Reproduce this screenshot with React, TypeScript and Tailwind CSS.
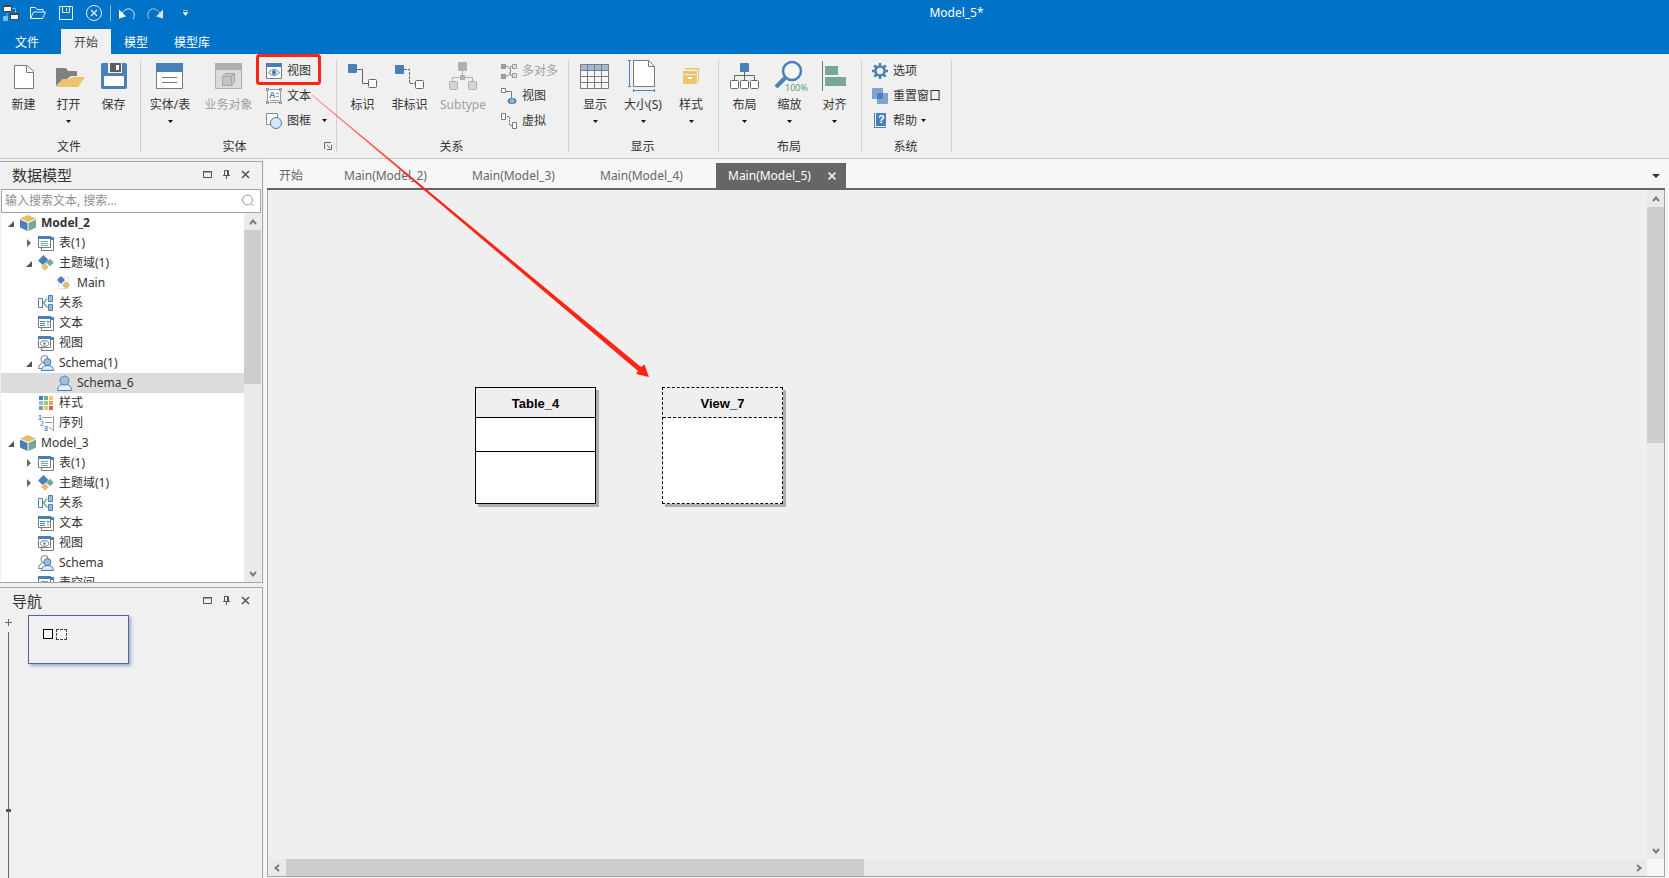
import React, { useState } from "react";

type IconName = keyof typeof icons;

const BLUE = "#4a80b8";
const GRAY = "#7a7a7a";
const GREEN = "#76a797";
const YELLOW = "#efc26c";

const icons = {
    newFile: (
        <>
            <path d="M6.5 5.5h13l6 6v17h-19z" fill="#fff" stroke={GRAY} />
            <path d="M18.5 5.5v7h7" fill="#fff" stroke={GRAY} />
        </>
    ),
    open: (
        <>
            <path d="M3 26V9q0-1 1-1h9l2 3h8q1 0 1 1v4h-6l-4 3H10z" fill="#808080" />
            <path d="M3 27l7-8h6l4-2h12l-7 10z" fill={YELLOW} />
        </>
    ),
    save: (
        <>
            <path d="M3 5q0-2 2-2h22q2 0 2 2v22q0 2-2 2H5q-2 0-2-2z" fill={BLUE} />
            <path d="M6 17q0-1 1-1h18q1 0 1 1v9H6z" fill="#fff" />
            <path d="M10 2h14v11H10z" fill="#f0f0f0" />
            <path d="M12 3h11v9H12z" fill="#5e5e5e" />
            <path d="M18 5h3v5h-3z" fill="#fff" />
        </>
    ),
    entity: (
        <>
            <path d="M2.5 4h26v24.5h-26z" fill="#fff" stroke={GRAY} />
            <path d="M2 3h27v9H2z" fill={BLUE} />
            <path d="M8 17.5h15M8 22.5h15" stroke={GRAY} />
        </>
    ),
    business: (
        <>
            <path d="M2.5 4h26v24.5h-26z" fill="#dcdcdc" stroke="#b0b0b0" />
            <path d="M2 3h27v7H2z" fill="#b0b0b0" />
            <path d="M9.500 16.500l3-3h9v9l-3 3h-9zM9.500 16.500h9v9M18.500 16.500l3-3" fill="#c4c4c4" stroke="#a6a6a6" />
        </>
    ),
    identify: (
        <>
            <rect x="1" y="4" width="9" height="9" rx="1" fill={BLUE} />
            <path d="M10 9.500h5.500v14h6" fill="none" stroke="#666" />
            <rect x="21.500" y="19.500" width="8" height="8" rx="1" fill="#fff" stroke="#666" />
        </>
    ),
    nonIdentify: (
        <>
            <rect x="1" y="5" width="9" height="9" rx="1" fill={BLUE} />
            <path d="M10 9.500h5.500v14h6" fill="none" stroke="#666" strokeDasharray="3 1" />
            <rect x="21.500" y="20.500" width="8" height="8" rx="1" fill="#fff" stroke="#666" />
        </>
    ),
    subtype: (
        <>
            <path d="M15.500 11v8M5.500 22v-4.500h20v4.500" fill="none" stroke="#b0b0b0" />
            <rect x="11" y="2" width="9" height="9" rx="1" fill="#b0b0b0" />
            <rect x="13" y="15" width="5" height="5" fill="#b0b0b0" />
            <rect x="2.500" y="21.500" width="8" height="8" rx="1" fill="#d4d4d4" stroke="#b0b0b0" />
            <rect x="21.500" y="21.500" width="8" height="8" rx="1" fill="#d4d4d4" stroke="#b0b0b0" />
        </>
    ),
    grid: (
        <>
            <path d="M1.500 4.500h28v24h-28z" fill="#f7f7f7" />
            <path d="M2 5h27v5H2z" fill="#9fb9d8" />
            <path d="M1.500 4.500h28v24h-28zM1 10.500h29M1 16.500h29M1 22.500h29M8.500 4v25M15.500 4v25M22.500 4v25" fill="none" stroke={GRAY} />
        </>
    ),
    size: (
        <>
            <path d="M6.500 .5h15l6 6v20h-21z" fill="#fff" stroke={GRAY} />
            <path d="M21.500 .5v6h6" fill="none" stroke={GRAY} />
            <path d="M2.500 0v27M1 .5h3M1 26.500h3M6 30.500h22M6.500 29v3M27.500 29v3" stroke={BLUE} />
        </>
    ),
    style: (
        <>
            <path d="M10 8h14v14h-1V9.500H10z" fill={YELLOW} />
            <path d="M8 11h14v3H8zM8 15h14v9H8z" fill={YELLOW} />
            <path d="M13 17h4v2h-4z" fill="#fff" />
        </>
    ),
    layout: (
        <>
            <path d="M15.500 12v8M5.500 20v-4.500h20v4.500" fill="none" stroke="#666" />
            <rect x="11" y="3" width="9" height="9" rx="1" fill={BLUE} />
            <rect x="1.500" y="20.500" width="8" height="8" rx="1" fill="#fff" stroke="#666" />
            <rect x="11.500" y="20.500" width="8" height="8" rx="1" fill="#fff" stroke="#666" />
            <rect x="21.500" y="20.500" width="8" height="8" rx="1" fill="#fff" stroke="#666" />
        </>
    ),
    zoom: (
        <>
            <circle cx="18" cy="11" r="9" fill="#f5f5f5" stroke={BLUE} strokeWidth="2.500" />
            <path d="M11 18L2 27" stroke={BLUE} strokeWidth="4" />
            <text x="11" y="31" fontSize="9" fill="#5b9a85" fontFamily="Noto Sans">100%</text>
        </>
    ),
    align: (
        <>
            <path d="M3.500 1v30" stroke={GRAY} />
            <path d="M6 6h13v9H6zM6 17h21v9H6z" fill={GREEN} />
        </>
    ),
    view: (
        <>
            <path d="M.5 1h15v14.500H.5z" fill="#fff" stroke={GRAY} />
            <path d="M0 0h16v4H0z" fill={BLUE} />
            <path d="M2.500 9.500q5.500-6 11 0q-5.500 6-11 0z" fill="#fff" stroke={BLUE} />
            <circle cx="8" cy="9.500" r="2.200" fill={BLUE} />
        </>
    ),
    text: (
        <>
            <path d="M1.500 1.500h13v13h-13z" fill="#fff" stroke="#9a9a9a" />
            <path d="M.5 .5h2v2h-2zM13.500 .5h2v2h-2zM.5 13.500h2v2h-2zM13.500 13.500h2v2h-2z" fill="#ddd" stroke="#8a8a8a" />
            <text x="3" y="10" fontSize="9" fontWeight="700" fill={BLUE} fontFamily="Liberation Sans">A</text>
            <path d="M10 5.500h3M10 8.500h3M4 12.500h9" stroke="#9a9a9a" />
        </>
    ),
    shapes: (
        <>
            <path d="M.5 .5h11v11H.5z" fill="#fff" stroke="#8a8a8a" />
            <circle cx="10" cy="10" r="5.500" fill="#d8e4f2" stroke={BLUE} />
        </>
    ),
    manyToMany: (
        <>
            <path d="M5 3.500h2l3 4.500-3 5H5M11 3.500H9.500v9H11" fill="none" stroke="#9a9a9a" />
            <path d="M0 1h5v5H0zM0 11h5v5H0z" fill="#9a9a9a" />
            <path d="M11.500 1.500h4v4h-4zM11.500 10.500h4v4h-4z" fill="#ddd" stroke="#9a9a9a" />
        </>
    ),
    viewRelation: (
        <>
            <path d="M.5 .5h4v4h-4z" fill="#fff" stroke={GRAY} />
            <path d="M5 3.500h5.500V10" fill="none" stroke={GRAY} />
            <ellipse cx="11" cy="13" rx="4.500" ry="3" fill={BLUE} />
            <circle cx="11" cy="13" r="1.800" fill="#fff" />
            <circle cx="11" cy="13" r="1" fill={BLUE} />
        </>
    ),
    virtual: (
        <>
            <path d="M.5 .5h4v6h-4zM11.500 9.500h4v6h-4z" fill="#fff" stroke={GRAY} />
            <path d="M6 3.500h2.500v9H11" fill="none" stroke={GRAY} strokeDasharray="2 1" />
        </>
    ),
    gear: (
        <>
            <circle cx="8" cy="8" r="4.500" fill="none" stroke={BLUE} strokeWidth="2.500" />
            <path d="M8 0v3M8 13v3M0 8h3M13 8h3M2.300 2.300l2.200 2.200M11.500 11.500l2.200 2.200M2.300 13.700l2.200-2.200M11.500 4.500l2.200-2.200" stroke={BLUE} strokeWidth="2.500" />
        </>
    ),
    resetWindow: (
        <>
            <path d="M0 0h11v11H0z" fill="#7fa5cf" />
            <path d="M5 5h11v11H5z" fill="#7fa5cf" />
            <path d="M5 5h6v6H5z" fill={BLUE} />
        </>
    ),
    help: (
        <>
            <path d="M4 0h10v13H4z" fill={BLUE} />
            <path d="M2.500 0v15M2.500 14.500H14" fill="none" stroke={BLUE} />
            <text x="6" y="10" fontSize="11" fontWeight="700" fill="#fff" fontFamily="Liberation Sans">?</text>
        </>
    ),
    model: (
        <>
            <path d="M8 0l8 3.500L8 7 0 3.500z" fill="#e5bd6c" />
            <path d="M0 4.500L7.500 8v8L0 12.500z" fill={BLUE} />
            <path d="M16 4.500L8.500 8v8l7.500-3.500z" fill={GREEN} />
        </>
    ),
    tables: (
        <>
            <path d="M3.500 2.500h12v13h-12z" fill="#fff" stroke={GRAY} />
            <path d="M.5 1.500h12v11H.5z" fill="#fff" stroke={GRAY} />
            <path d="M0 1h13v3H0zM13 2h3v3h-3z" fill={BLUE} />
            <path d="M3 6.500h7M3 8.500h7M3 10.500h7" stroke={GREEN} />
        </>
    ),
    domain: (
        <>
            <path d="M5.500 0L11 5.500 5.500 11 0 5.500z" fill={BLUE} />
            <path d="M12 3.500l4 4-4 4-4-4z" fill={GREEN} stroke="#fff" strokeWidth=".5" />
            <path d="M7 8l4 4-4 4-4-4z" fill="#e5bd78" stroke="#fff" strokeWidth=".5" />
        </>
    ),
    main: (
        <>
            <path d="M2.500 2.500h10v11h-10z" fill="#fff" stroke="#e2e2e2" />
            <path d="M5 1l4 4-4 4-4-4z" fill={BLUE} />
            <path d="M10 6l4 4-4 4-4-4z" fill="#e0b97a" />
        </>
    ),
    relation: (
        <>
            <path d="M9 3.500L5.500 8l4 4.500" fill="none" stroke={GREEN} strokeWidth="1.500" />
            <path d="M.5 3.500h4v9h-4z" fill="#fff" stroke={BLUE} />
            <path d="M10.500 .5h4v6h-4zM10.500 9.500h4v6h-4z" fill="#9fb9d8" stroke={BLUE} />
        </>
    ),
    texts: (
        <>
            <path d="M3.500 2.500h12v13h-12z" fill="#fff" stroke={GRAY} />
            <path d="M.5 1.500h12v11H.5z" fill="#fff" stroke={GRAY} />
            <path d="M0 1h13v3H0zM13 2h3v3h-3z" fill={BLUE} />
            <path d="M2 6.500h5M2 8.500h5M2 10.500h5" stroke={BLUE} />
            <path d="M8 6.500h4M10 6v5" stroke={GREEN} />
        </>
    ),
    views: (
        <>
            <path d="M3.500 2.500h12v13h-12z" fill="#fff" stroke={GRAY} />
            <path d="M.5 1.500h12v11H.5z" fill="#fff" stroke={GRAY} />
            <path d="M0 1h13v3H0zM13 2h3v3h-3z" fill={BLUE} />
            <ellipse cx="6.500" cy="8.500" rx="4.200" ry="2.800" fill="#fff" stroke={GRAY} />
            <circle cx="6.500" cy="8.500" r="1.500" fill={GREEN} />
        </>
    ),
    schemas: (
        <>
            <circle cx="6.500" cy="4" r="3.500" fill="#fff" stroke={GRAY} />
            <path d="M.5 13.500q0-4 4-5.500l3 0v5.500z" fill="#fff" stroke={GRAY} />
            <circle cx="9.500" cy="7" r="3.500" fill="#9fbbdc" stroke={BLUE} />
            <path d="M3.500 15.500q0-4.500 4.500-5h3q4.500 .5 4.500 5z" fill="#d8e4f2" stroke={BLUE} />
        </>
    ),
    schema: (
        <>
            <path d="M1.500 15.500q0-5 4.500-6h5q4.500 1 4.500 6z" fill="#e4edf7" stroke={BLUE} />
            <circle cx="8.500" cy="5.500" r="4.500" fill="#a3bddc" stroke={BLUE} />
        </>
    ),
    styles: (
        <>
            <path d="M1 1h4v4H1z" fill={BLUE} />
            <path d="M6 1h4v4H6zM1 11h4v4H1z" fill="#72a89a" />
            <path d="M11 1h4v4h-4z" fill={YELLOW} />
            <path d="M1 6h4v4H1z" fill="#8fc1d6" />
            <path d="M6 6h4v4H6z" fill="#9cc487" />
            <path d="M11 6h4v4h-4z" fill="#e6a35c" />
            <path d="M6 11h4v4H6z" fill="#dccb7e" />
            <path d="M11 11h4v4h-4z" fill="#de6440" />
        </>
    ),
    sequence: (
        <>
            <text x="0" y="5" fontSize="7" fontWeight="700" fill={BLUE} fontFamily="Liberation Sans">1</text>
            <text x="2" y="11" fontSize="7" fontWeight="700" fill={GREEN} fontFamily="Liberation Sans">2</text>
            <text x="6" y="16" fontSize="7" fontWeight="700" fill={BLUE} fontFamily="Liberation Sans">3</text>
            <path d="M4 2.500h10M7 7.500h7M15.500 1v14.500L11 12" fill="none" stroke="#9a9a9a" />
        </>
    ),
    app: (
        <>
            <path d="M8 3.500h4.500V8M4 8v4M8 12.500h3" fill="none" stroke="#5ab4f5" />
            <path d="M.5 .5h8v6h-8z" fill="#fff" stroke="#444" />
            <path d="M0 0h9v2H0z" fill="#444" />
            <path d="M7.500 8.500h8v6h-8z" fill="#fff" stroke="#444" />
            <path d="M7 8h9v2H7z" fill="#444" />
            <path d="M0 11h5v5H0z" fill="#6cc0fa" />
        </>
    ),
    openLine: <path d="M.5 13.500v-11h5l1.500 2h6V7M.5 13.500l3-6.500h12l-3 6.500z" fill="none" stroke="#e5f1fb" />,
    saveLine: <path d="M1.500 1.500h13v13h-13zM4.500 1.500v6h7v-6M8.500 3v3" fill="none" stroke="#e5f1fb" />,
    closeCircle: (
        <>
            <circle cx="8" cy="8" r="7.500" fill="none" stroke="#e5f1fb" />
            <path d="M5 5l6 6M11 5l-6 6" stroke="#e5f1fb" strokeWidth="1.300" />
        </>
    ),
    undo: (
        <>
            <path d="M3 8q5-6.500 10-3q4 3.500 1 9" fill="none" stroke="#d5e8f8" />
            <path d="M0 4.500v9l7-2z" fill="#fff" />
        </>
    ),
    redo: (
        <>
            <path d="M13 8Q8 1.500 3 5q-4 3.500-1 9" fill="none" stroke="#a8c8e2" />
            <path d="M16 4.500v9l-7-2z" fill="#d5e3ee" />
        </>
    ),
};

const Icon: React.FC<{ name: IconName; size?: number }> = ({ name, size = 16 }) => (
    <svg width={size} height={size} viewBox={`0 0 ${size} ${size}`} className="shrink-0 overflow-visible" aria-hidden="true">
        {icons[name]}
    </svg>
);

const Caret: React.FC = () => (
    <svg width="5" height="3" viewBox="0 0 5 3" aria-hidden="true">
        <path d="M0 0h5L2.500 3z" fill="#111" />
    </svg>
);

type LargeProps = {
    icon: IconName;
    label: string;
    width: string;
    menu?: boolean;
    disabled?: boolean;
};

const LargeButton: React.FC<LargeProps> = ({ icon, label, width, menu, disabled }) => (
    <button disabled={disabled} className={`${width} flex flex-col items-center whitespace-nowrap disabled:text-[#a0a0a0]`}>
        <Icon name={icon} size={32} />
        <span className="mt-[5px] leading-4">{label}</span>
        {menu && <span className="mt-[7px] flex"><Caret /></span>}
    </button>
);

type SmallProps = {
    icon: IconName;
    label: string;
    menu?: boolean;
    wideMenu?: boolean;
    disabled?: boolean;
};

const SmallButton: React.FC<SmallProps> = ({ icon, label, menu, wideMenu, disabled }) => (
    <button disabled={disabled} className="flex h-[25px] items-center whitespace-nowrap px-2 disabled:text-[#a0a0a0]">
        <Icon name={icon} />
        <span className="ml-[5px]">{label}</span>
        {menu && <span className={wideMenu ? "ml-[11px]" : "ml-1"}><Caret /></span>}
    </button>
);

type GroupProps = {
    title: string;
    className: string;
    launcher?: boolean;
    children: React.ReactNode;
};

const Group: React.FC<GroupProps> = ({ title, className, launcher, children }) => (
    <div className="relative my-1.5 shrink-0 border-r border-[#d0d0d0]">
        <div className={`${className} flex h-20`}>{children}</div>
        <div className={`h-3 text-center leading-[14px] ${launcher ? "pr-2" : "pr-0.5"}`}>{title}</div>
        {launcher && (
            <button aria-label="More" className="absolute bottom-0.5 right-1">
                <svg width="8" height="8" viewBox="0 0 8 8" className="block">
                    <path d="M.5 7V.5H7M3 3l3 3M7.500 3v4.500H3" fill="none" stroke="#666" />
                </svg>
            </button>
        )}
    </div>
);

const Ribbon: React.FC = () => (
    <div className="flex shrink-0 border-b border-[#c3c3c3] bg-[#f0f0f0]">
        <Group title="文件" className="w-[140px] pl-px">
            <LargeButton icon="newFile" label="新建" width="w-[45px]" />
            <LargeButton icon="open" label="打开" width="w-[45px]" menu />
            <LargeButton icon="save" label="保存" width="w-[45px]" />
        </Group>
        <Group title="实体" className="w-[195px]" launcher>
            <LargeButton icon="entity" label="实体/表" width="w-[58px]" menu />
            <LargeButton icon="business" label="业务对象" width="w-[59px]" disabled />
            <div className="-mt-0.5 flex flex-col">
                <SmallButton icon="view" label="视图" />
                <SmallButton icon="text" label="文本" />
                <SmallButton icon="shapes" label="图框" menu wideMenu />
            </div>
        </Group>
        <Group title="关系" className="w-[231px] pl-0.5">
            <LargeButton icon="identify" label="标识" width="w-[47px]" />
            <LargeButton icon="nonIdentify" label="非标识" width="w-[47px]" />
            <LargeButton icon="subtype" label="Subtype" width="w-[60px]" disabled />
            <div className="-mt-0.5 flex flex-col">
                <SmallButton icon="manyToMany" label="多对多" disabled />
                <SmallButton icon="viewRelation" label="视图" />
                <SmallButton icon="virtual" label="虚拟" />
            </div>
        </Group>
        <Group title="显示" className="w-[149px] pl-0.5">
            <LargeButton icon="grid" label="显示" width="w-12" menu />
            <LargeButton icon="size" label="大小(S)" width="w-12" menu />
            <LargeButton icon="style" label="样式" width="w-12" menu />
        </Group>
        <Group title="布局" className="w-[142px] pl-[3px]">
            <LargeButton icon="layout" label="布局" width="w-[45px]" menu />
            <LargeButton icon="zoom" label="缩放" width="w-[45px]" menu />
            <LargeButton icon="align" label="对齐" width="w-[45px]" menu />
        </Group>
        <Group title="系统" className="w-[89px] pl-0.5">
            <div className="-mt-0.5 flex flex-col">
                <SmallButton icon="gear" label="选项" />
                <SmallButton icon="resetWindow" label="重置窗口" />
                <SmallButton icon="help" label="帮助" menu />
            </div>
        </Group>
    </div>
);

const PanelHeader: React.FC<{ title: string }> = ({ title }) => (
    <div className="flex h-[27px] shrink-0 items-center pb-0.5 pl-3 pr-3">
        <h2 className="flex-1 text-[15px] leading-5">{title}</h2>
        <div className="flex items-center gap-2.5 text-[#555]">
            <button aria-label="Maximize">
                <svg width="9" height="9" viewBox="0 0 9 9"><path d="M.5 1.500h8v6h-8zM0 2h9" fill="none" stroke="currentColor" /></svg>
            </button>
            <button aria-label="Pin">
                <svg width="9" height="9" viewBox="0 0 9 9"><path d="M2.500 5V.5h4V5M5.500 1v4M1 5.500h7M4.500 6v3" fill="none" stroke="currentColor" /></svg>
            </button>
            <button aria-label="Close">
                <svg width="9" height="9" viewBox="0 0 9 9"><path d="M1 1l7 7M8 1L1 8" stroke="currentColor" strokeWidth="1.500" /></svg>
            </button>
        </div>
    </div>
);

type Direction = "up" | "down" | "left" | "right";

const arrowPaths: Record<Direction, string> = {
    up: "M1 6l3-3.500L7 6",
    down: "M1 2L4 5.500 7 2",
    left: "M6 1L2.500 4 6 7",
    right: "M2 1l3.500 3L2 7",
};

const ScrollArrow: React.FC<{ direction: Direction }> = ({ direction }) => (
    <button aria-label={direction} className="flex size-[17px] shrink-0 items-center justify-center bg-[#eaeaea]">
        <svg width="8" height="8" viewBox="0 0 8 8">
            <path d={arrowPaths[direction]} fill="none" stroke="#7a7a7a" strokeWidth="2" />
        </svg>
    </button>
);

type TreeItem = {
    level: number;
    icon: IconName;
    label: string;
    state?: "open" | "closed";
    bold?: boolean;
};

const treeItems: TreeItem[] = [
    { level: 0, icon: "model", label: "Model_2", state: "open", bold: true },
    { level: 1, icon: "tables", label: "表(1)", state: "closed" },
    { level: 1, icon: "domain", label: "主题域(1)", state: "open" },
    { level: 2, icon: "main", label: "Main" },
    { level: 1, icon: "relation", label: "关系" },
    { level: 1, icon: "texts", label: "文本" },
    { level: 1, icon: "views", label: "视图" },
    { level: 1, icon: "schemas", label: "Schema(1)", state: "open" },
    { level: 2, icon: "schema", label: "Schema_6" },
    { level: 1, icon: "styles", label: "样式" },
    { level: 1, icon: "sequence", label: "序列" },
    { level: 0, icon: "model", label: "Model_3", state: "open" },
    { level: 1, icon: "tables", label: "表(1)", state: "closed" },
    { level: 1, icon: "domain", label: "主题域(1)", state: "closed" },
    { level: 1, icon: "relation", label: "关系" },
    { level: 1, icon: "texts", label: "文本" },
    { level: 1, icon: "views", label: "视图" },
    { level: 1, icon: "schemas", label: "Schema" },
    { level: 1, icon: "tables", label: "表空间" },
];

const indents = ["pl-px", "pl-[19px]", "pl-[37px]"];

const ModelTree: React.FC = () => {
    const [selected, setSelected] = useState(8);

    return (
        <ul className="min-w-0 flex-1 overflow-hidden bg-white">
            {treeItems.map((item, idx) => (
                <li key={idx}>
                    <button
                        className={`flex h-5 w-full items-center ${indents[item.level]} ${selected === idx ? "bg-[#dcdcdc]" : ""}`}
                        onClick={() => setSelected(idx)}
                    >
                        <span className="flex w-[18px] shrink-0 pl-1.5">
                            {item.state && (
                                <svg width="8" height="8" viewBox="0 0 8 8" aria-hidden="true">
                                    {item.state === "open" ? (
                                        <path d="M6 2v6H0z" fill="#555" />
                                    ) : (
                                        <path d="M1 0l4 4-4 4z" fill="#666" />
                                    )}
                                </svg>
                            )}
                        </span>
                        <Icon name={item.icon} />
                        <span className={`ml-[5px] ${item.bold ? "font-bold" : ""}`}>{item.label}</span>
                    </button>
                </li>
            ))}
        </ul>
    );
};

const Sidebar: React.FC = () => (
    <aside className="flex w-[263px] shrink-0 flex-col gap-1 pt-0.5">
        <section className="flex shrink-0 basis-[422px] flex-col overflow-hidden border-y border-r border-[#a5a5a5]">
            <PanelHeader title="数据模型" />
            <label className="mx-px flex h-6 shrink-0 items-center border border-[#a5a5a5] bg-white px-[3px]">
                <input
                    aria-label="搜索"
                    placeholder="输入搜索文本, 搜索..."
                    className="min-w-0 flex-1 outline-none placeholder:text-[#909090]"
                />
                <svg width="16" height="14" viewBox="0 0 16 14" aria-hidden="true">
                    <circle cx="6.500" cy="6" r="5" fill="none" stroke="#999" />
                    <path d="M10 9.500l2.500 2.500" stroke="#999" />
                </svg>
            </label>
            <div className="mx-px flex min-h-0 flex-1">
                <ModelTree />
                <div className="flex w-[17px] flex-col bg-[#eaeaea]">
                    <ScrollArrow direction="up" />
                    <div className="h-[154px] bg-[#cdcdcd]" />
                    <div className="flex-1" />
                    <ScrollArrow direction="down" />
                </div>
            </div>
        </section>
        <section className="flex min-h-0 flex-1 flex-col border-r border-t border-[#a5a5a5]">
            <PanelHeader title="导航" />
            <div className="flex min-h-0 flex-1">
                <div className="flex w-7 flex-col pl-[5px] pt-1">
                    <svg width="7" height="7" viewBox="0 0 7 7" aria-hidden="true">
                        <path d="M0 3.500h7M3.500 0v7" stroke="#666" />
                    </svg>
                    <input
                        type="range"
                        aria-label="缩放"
                        defaultValue={73}
                        className="mt-1.5 min-h-0 w-[7px] flex-1 appearance-none bg-[linear-gradient(#666,#666)] bg-[length:1px_100%] bg-center bg-no-repeat [writing-mode:vertical-lr] [&::-webkit-slider-thumb]:box-border [&::-webkit-slider-thumb]:h-[3px] [&::-webkit-slider-thumb]:w-[7px] [&::-webkit-slider-thumb]:appearance-none [&::-webkit-slider-thumb]:border-y [&::-webkit-slider-thumb]:border-[#f0f0f0] [&::-webkit-slider-thumb]:bg-[#555]"
                    />
                </div>
                <div className="flex h-[49px] w-[101px] gap-[3px] border border-[#4f669c] pl-3.5 pt-[13px] shadow-[2px_2px_3px_rgba(79,102,156,0.5)]">
                    <span className="size-2.5 border border-black bg-[#f7f7f7]" />
                    <span className="size-[11px] border border-dashed border-[#444] bg-[#f7f7f7]" />
                </div>
            </div>
        </section>
    </aside>
);

const tabs = ["开始", "Main(Model_2)", "Main(Model_3)", "Main(Model_4)", "Main(Model_5)"];

const Workspace: React.FC = () => {
    const [active, setActive] = useState(4);

    return (
        <main className="ml-px flex min-w-0 flex-1 flex-col bg-[#f7f7f7] pb-px pl-[3px] pr-1">
            <div className="flex shrink-0 items-center border-b-2 border-[#666] pt-1">
                {tabs.map((tab, idx) => (
                    <div
                        key={tab}
                        className={`flex h-[25px] items-center pl-3 ${idx === 0 ? "w-[65px]" : "w-32"} ${
                            active === idx ? "min-w-[130px] bg-[#666] text-white" : "text-[#666]"
                        }`}
                    >
                        <button className="flex-1 text-left" onClick={() => setActive(idx)}>{tab}</button>
                        {active === idx && (
                            <button aria-label="Close" className="mr-2.5">
                                <svg width="8" height="8" viewBox="0 0 8 8">
                                    <path d="M.5 .5l7 7M7.500 .5l-7 7" stroke="#eee" strokeWidth="1.700" />
                                </svg>
                            </button>
                        )}
                    </div>
                ))}
                <button aria-label="Tabs" className="ml-auto mr-[5px]">
                    <svg width="8" height="4" viewBox="0 0 8 4" className="block"><path d="M0 0h8L4 4z" fill="#333" /></svg>
                </button>
            </div>
            <div className="flex min-h-0 flex-1 flex-col border-x border-b border-[#a5a5a5]">
                <div className="flex min-h-0 flex-1">
                    <div className="relative min-w-0 flex-1 overflow-hidden bg-[#efefef] font-['Liberation_Sans',sans-serif] text-[13px] font-bold text-black">
                        <div className="absolute left-[207px] top-[197px] flex h-[117px] w-[121px] flex-col border border-black bg-white shadow-[3px_3px_0_#adadad]">
                            <div className="flex h-[30px] items-center justify-center border-b border-black bg-[#efefef] pt-0.5">Table_4</div>
                            <div className="h-[34px] border-b border-black" />
                        </div>
                        <div className="absolute left-[394px] top-[197px] flex h-[117px] w-[121px] flex-col border border-dashed border-black bg-white shadow-[3px_3px_0_#adadad]">
                            <div className="flex h-[30px] items-center justify-center border-b border-dashed border-black bg-[#efefef] pt-0.5">View_7</div>
                        </div>
                    </div>
                    <div className="flex w-[17px] flex-col bg-[#eaeaea]">
                        <ScrollArrow direction="up" />
                        <div className="h-[236px] bg-[#cdcdcd]" />
                        <div className="flex-1" />
                        <ScrollArrow direction="down" />
                    </div>
                </div>
                <div className="mr-[17px] flex h-[17px] shrink-0 bg-[#eaeaea]">
                    <ScrollArrow direction="left" />
                    <div className="ml-px w-[578px] bg-[#cdcdcd]" />
                    <div className="flex-1" />
                    <ScrollArrow direction="right" />
                </div>
            </div>
        </main>
    );
};

const menuTabs = [
    { label: "文件", className: "w-[61px] pr-[7px]" },
    { label: "开始", className: "w-[50px] bg-[#f0f0f0] text-[#444]" },
    { label: "模型", className: "w-[50px]" },
    { label: "模型库", className: "w-[62px]" },
];

const TitleBar: React.FC = () => (
    <header className="shrink-0 bg-[#0072c8] text-white">
        <div className="flex h-[29px] items-center pb-[3px] pl-[3px]">
            <Icon name="app" />
            <button aria-label="Open" className="ml-[11px]"><Icon name="openLine" /></button>
            <button aria-label="Save" className="ml-3"><Icon name="saveLine" /></button>
            <button aria-label="Close" className="ml-3"><Icon name="closeCircle" /></button>
            <span className="ml-2 h-4 w-px bg-[#8fb9dc]" />
            <button aria-label="Undo" className="ml-2"><Icon name="undo" /></button>
            <button aria-label="Redo" className="ml-3"><Icon name="redo" /></button>
            <button aria-label="Customize" className="ml-5">
                <svg width="5" height="6" viewBox="0 0 5 6" className="block"><path d="M0 .5h5M0 2.500h5L2.500 5.500z" fill="#fff" stroke="#fff" strokeWidth=".6" /></svg>
            </button>
            <h1 className="flex-1 pl-14 text-center">Model_5*</h1>
        </div>
        <nav className="flex">
            {menuTabs.map((tab) => (
                <button key={tab.label} className={`h-[25px] pt-0.5 text-center ${tab.className}`}>{tab.label}</button>
            ))}
        </nav>
    </header>
);

// Red callout that leads from the view command to the new view on the canvas
const Annotation: React.FC = () => (
    <svg className="pointer-events-none absolute inset-0 size-full" aria-hidden="true">
        <defs>
            <linearGradient id="tail" x1="312" y1="95" x2="420" y2="185" gradientUnits="userSpaceOnUse">
                <stop offset="0" stopColor="#ff2414" stopOpacity=".5" />
                <stop offset="1" stopColor="#ff2414" />
            </linearGradient>
        </defs>
        <rect x="257.500" y="55.500" width="62" height="28" rx="2" fill="none" stroke="#ff2414" strokeWidth="3" />
        <path d="M312 94.600L641 367l3.500-2.500 4.500 12.500-13-3 2-3L312 95.400z" fill="url(#tail)" />
    </svg>
);

const App: React.FC = () => (
    <div className="relative flex h-screen flex-col overflow-hidden bg-[#f0f0f0] font-['Noto_Sans','Noto_Sans_CJK_SC',sans-serif] text-xs text-[#333]">
        <TitleBar />
        <Ribbon />
        <div className="flex min-h-0 flex-1">
            <Sidebar />
            <Workspace />
        </div>
        <Annotation />
    </div>
);

export default App;
